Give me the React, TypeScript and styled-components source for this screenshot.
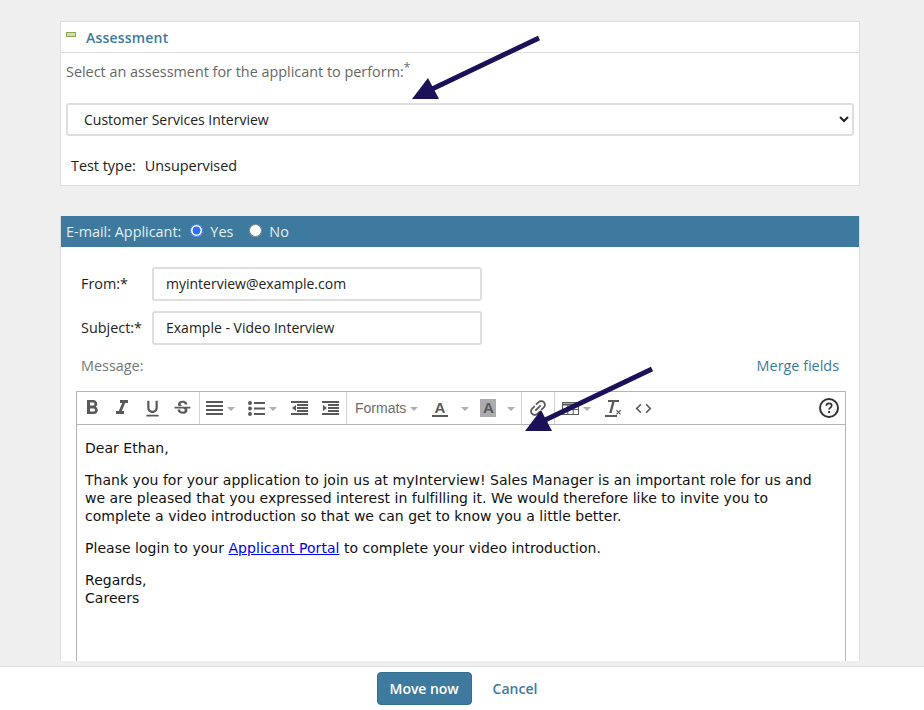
import styled, { createGlobalStyle } from "styled-components";
import {
  MdFormatBold,
  MdFormatItalic,
  MdFormatUnderlined,
  MdStrikethroughS,
  MdLink,
  MdCode,
} from "react-icons/md";

const GlobalStyle = createGlobalStyle`
  html, body { margin: 0; height: 100%; overflow: hidden; }
  body {
    background: #efefef;
    font-family: "Open Sans", "Liberation Sans", sans-serif;
    font-size: 14.4px;
    color: #222;
  }
  * { box-sizing: border-box; }
`;

const Page = styled.div`
  position: relative;
  height: 710px;
  display: flex;
  flex-direction: column;
`;

const Main = styled.main`
  flex: 1;
  min-height: 0;
  display: flex;
  flex-direction: column;
  gap: 30px;
  padding: 21px 64px 5px 60px;
`;

const Panel = styled.section`
  background: #fff;
  border: 1px solid #dedede;
  height: 165px;
  flex: none;
`;

const PanelHeader = styled.div`
  height: 31px;
  display: flex;
  align-items: center;
  gap: 10px;
  padding-left: 5px;
  border-bottom: 1px solid #dedede;
  color: #3d7a9e;
  font-size: 14px;
  font-weight: 600;
  letter-spacing: 0.2px;
`;

const Collapse = styled.span`
  width: 10px;
  height: 5px;
  margin-top: -5px;
  background: #d5dfa5;
  border: 1px solid #8ea34f;
`;

const PanelBody = styled.div`
  padding: 9px 5px 0;
`;

const Prompt = styled.div`
  color: #666;
  line-height: 20px;
  height: 31px;
  sup {
    font-size: 12px;
    line-height: 0;
    vertical-align: 5px;
  }
`;

const Select = styled.select`
  display: block;
  width: 100%;
  height: 33px;
  margin-top: 10px;
  padding: 0 12px;
  border: 2px solid #dedede;
  border-radius: 3px;
  background: #fff;
  color: #222;
  font: inherit;
  font-size: 14px;
`;

const TestType = styled.div`
  display: flex;
  gap: 9px;
  margin: 20px 0 0 5px;
  line-height: 20px;
`;

const EmailPanel = styled.section`
  flex: 1;
  min-height: 0;
  overflow: hidden;
  background: #fff;
  border-left: 1px solid #dedede;
  border-right: 1px solid #dedede;
`;

const EmailHeader = styled.div`
  height: 31px;
  display: flex;
  align-items: center;
  padding-left: 5px;
  background: #3d7a9e;
  color: #e6eef3;
`;

const RadioLabel = styled.label`
  display: flex;
  align-items: center;
  margin-left: 9px;
  margin-right: 7px;
  input {
    width: 13px;
    height: 13px;
    margin: -2px 7px 0 0;
    accent-color: #2f6ff0;
  }
`;

const EmailBody = styled.div`
  padding: 20px 13px 0 15px;
`;

const FieldRow = styled.div`
  display: grid;
  grid-template-columns: 71px 330px;
  align-items: center;
  margin-bottom: 10px;
  padding-left: 5px;
`;

const FieldLabel = styled.label`
  margin-top: -2px;
`;

const TextInput = styled.input`
  height: 34px;
  width: 100%;
  padding: 0 12px 2px;
  border: 2px solid #dedede;
  border-radius: 3px;
  color: #222;
  font: inherit;
  font-size: 14px;
`;

const MessageRow = styled.div`
  display: flex;
  justify-content: space-between;
  padding: 1px 7px 0 5px;
  height: 36px;
  line-height: 20px;
  color: #777;
`;

const MergeLink = styled.a`
  color: #3d7a9e;
`;

const Editor = styled.div`
  border: 1px solid #b4b4b4;
  height: 400px;
`;

const Toolbar = styled.div`
  height: 33px;
  display: flex;
  border-bottom: 1px solid #b4b4b4;
  color: #595959;
`;

const ToolGroup = styled.div<{ $padLeft?: number; $padRight?: number; $last?: boolean }>`
  display: flex;
  align-items: center;
  padding: 0 ${(p) => p.$padRight ?? 0}px 0 ${(p) => p.$padLeft ?? 0}px;
  border-right: ${(p) => (p.$last ? "0" : "1px solid #d2d2d2")};
`;

const ToolButton = styled.span<{ $w?: number }>`
  display: flex;
  align-items: center;
  justify-content: center;
  flex: none;
  width: ${(p) => p.$w ?? 30}px;
  gap: 4px;
`;

const Caret = styled.span`
  width: 0;
  height: 0;
  margin-top: 1px;
  border-left: 4px solid transparent;
  border-right: 4px solid transparent;
  border-top: 4px solid #b0b0b0;
`;

const Formats = styled.span`
  display: flex;
  align-items: center;
  gap: 4px;
  font-family: "Liberation Sans", sans-serif;
  font-size: 14px;
  color: #6b6b6b;
`;

const ColorLetter = styled.span<{ $shade?: boolean }>`
  width: 16px;
  height: 18px;
  display: flex;
  align-items: center;
  justify-content: center;
  font-family: "Liberation Sans", sans-serif;
  font-size: 15px;
  font-weight: 700;
  line-height: 1;
  color: #595959;
  background: ${(p) => (p.$shade ? "#acacac" : "transparent")};
  border-bottom: 2px solid ${(p) => (p.$shade ? "#acacac" : "#595959")};
`;

const HelpSpacer = styled.div`
  margin-left: auto;
  padding-right: 6px;
  display: flex;
  align-items: center;
  color: #333;
`;

const EditorBody = styled.div`
  padding: 14px 14px 0 8px;
  font-family: "DejaVu Sans", Verdana, sans-serif;
  font-size: 14px;
  line-height: 18px;
  letter-spacing: 0.03px;
  color: #111;
  p {
    margin: 0 0 14px;
  }
  a {
    color: #0000ee;
  }
`;

const Footer = styled.footer`
  flex: none;
  height: 44px;
  display: flex;
  align-items: center;
  justify-content: center;
  gap: 21px;
  padding-right: 10px;
  background: #fff;
  border-top: 1px solid #dedede;
`;

const MoveButton = styled.button`
  width: 95px;
  height: 33px;
  border: 1px solid #336d8f;
  border-radius: 4px;
  background: #3d7a9e;
  color: #fff;
  font: 600 14px "Open Sans", sans-serif;
  letter-spacing: -0.05px;
`;

const CancelLink = styled.a`
  color: #3d7a9e;
  font-size: 14px;
  font-weight: 600;
`;

const Arrow = styled.svg`
  position: absolute;
  left: 0;
  top: 0;
  pointer-events: none;
`;

const AlignIcon = () => (
  <svg width="17" height="14" viewBox="0 0 17 14" fill="#595959">
    <rect y="0" width="17" height="2" />
    <rect y="4" width="17" height="2" />
    <rect y="8" width="17" height="2" />
    <rect y="12" width="17" height="2" />
  </svg>
);

const ListIcon = () => (
  <svg width="17" height="15" viewBox="0 0 17 15" fill="#595959">
    <circle cx="2" cy="2" r="2" />
    <circle cx="2" cy="7.5" r="2" />
    <circle cx="2" cy="13" r="2" />
    <rect x="6" y="1" width="11" height="2" />
    <rect x="6" y="6.5" width="11" height="2" />
    <rect x="6" y="12" width="11" height="2" />
  </svg>
);

const IndentIcon = ({ flip }: { flip?: boolean }) => (
  <svg width="17" height="14" viewBox="0 0 17 14" fill="#595959">
    <rect y="0" width="17" height="2" />
    <rect x="6" y="3" width="11" height="2" />
    <rect x="6" y="6" width="11" height="2" />
    <rect x="6" y="9" width="11" height="2" />
    <rect y="12" width="17" height="2" />
    <path d={flip ? "M1 4l4 3-4 3z" : "M5 4L1 7l4 3z"} />
  </svg>
);

const TableIcon = () => (
  <svg width="17" height="13" viewBox="0 0 17 13" fill="none" stroke="#595959">
    <rect x="0.5" y="0.5" width="16" height="12" />
    <path d="M0 2.5h17" strokeWidth="2" />
    <path d="M5.8 3v10M11.2 3v10M0 7.5h17" />
  </svg>
);

const ClearIcon = () => (
  <svg width="17" height="18" viewBox="0 0 17 18" fill="#595959">
    <rect x="3" y="1" width="11" height="2" />
    <path d="M7.4 2h2.4L6.6 14H4.2z" />
    <rect x="0" y="16" width="12" height="2" />
    <path d="M11 11.5l.8-.8 1.7 1.7 1.7-1.7.8.8-1.7 1.7 1.7 1.7-.8.8-1.7-1.7-1.7 1.7-.8-.8 1.7-1.7z" />
  </svg>
);

const HelpIcon = () => (
  <svg width="20" height="20" viewBox="0 0 20 20" fill="none">
    <circle cx="10" cy="10" r="9" stroke="#333" strokeWidth="2" />
    <path
      d="M7.4 7.8c0-1.6 1.1-2.5 2.7-2.5s2.6.9 2.6 2.2c0 1.1-.6 1.6-1.4 2.2-.8.5-1.2 1-1.2 1.9"
      stroke="#333"
      strokeWidth="1.8"
    />
    <rect x="9.1" y="13" width="1.9" height="2" fill="#333" />
  </svg>
);

export default function App() {
  return (
    <>
      <GlobalStyle />
      <Page>
        <Main>
          <Panel>
            <PanelHeader>
              <Collapse />
              Assessment
            </PanelHeader>
            <PanelBody>
              <Prompt>
                Select an assessment for the applicant to perform:<sup>*</sup>
              </Prompt>
              <Select defaultValue="customer">
                <option value="customer">Customer Services Interview</option>
              </Select>
              <TestType>
                <span>Test type:</span>
                <span>Unsupervised</span>
              </TestType>
            </PanelBody>
          </Panel>

          <EmailPanel>
            <EmailHeader>
              E-mail: Applicant:
              <RadioLabel>
                <input type="radio" name="email" defaultChecked />
                Yes
              </RadioLabel>
              <RadioLabel>
                <input type="radio" name="email" />
                No
              </RadioLabel>
            </EmailHeader>
            <EmailBody>
              <FieldRow>
                <FieldLabel>From:*</FieldLabel>
                <TextInput defaultValue="myinterview@example.com" />
              </FieldRow>
              <FieldRow>
                <FieldLabel>Subject:*</FieldLabel>
                <TextInput defaultValue="Example - Video Interview" />
              </FieldRow>
              <MessageRow>
                <span>Message:</span>
                <MergeLink>Merge fields</MergeLink>
              </MessageRow>
              <Editor>
                <Toolbar>
                  <ToolGroup>
                    <ToolButton><MdFormatBold size={24} /></ToolButton>
                    <ToolButton><MdFormatItalic size={24} /></ToolButton>
                    <ToolButton><MdFormatUnderlined size={21} /></ToolButton>
                    <ToolButton><MdStrikethroughS size={21} /></ToolButton>
                    <ToolButton $w={2} />
                  </ToolGroup>
                  <ToolGroup>
                    <ToolButton $w={41}><AlignIcon /><Caret /></ToolButton>
                    <ToolButton $w={43}><ListIcon /><Caret /></ToolButton>
                    <ToolButton $w={31}><IndentIcon /></ToolButton>
                    <ToolButton $w={31}><IndentIcon flip /></ToolButton>
                  </ToolGroup>
                  <ToolGroup $padLeft={8} $padRight={6}>
                    <Formats>Formats<Caret /></Formats>
                    <ToolButton $w={43}><ColorLetter>A</ColorLetter></ToolButton>
                    <Caret />
                    <ToolButton $w={38}><ColorLetter $shade>A</ColorLetter></ToolButton>
                    <Caret />
                  </ToolGroup>
                  <ToolGroup>
                    <ToolButton $w={32}><MdLink size={22} style={{ transform: "rotate(-45deg)" }} /></ToolButton>
                  </ToolGroup>
                  <ToolGroup $last>
                    <ToolButton $w={43}><TableIcon /><Caret /></ToolButton>
                    <ToolButton $w={30}><ClearIcon /></ToolButton>
                    <ToolButton $w={30}><MdCode size={19} /></ToolButton>
                  </ToolGroup>
                  <HelpSpacer><HelpIcon /></HelpSpacer>
                </Toolbar>
                <EditorBody>
                  <p>Dear Ethan,</p>
                  <p>
                    Thank you for your application to join us at myInterview! Sales Manager is an
                    important role for us and we are pleased that you expressed interest in
                    fulfilling it. We would therefore like to invite you to complete a video
                    introduction so that we can get to know you a little better.
                  </p>
                  <p>
                    Please login to your <a href="#portal">Applicant Portal</a> to complete your
                    video introduction.
                  </p>
                  <p>
                    Regards,
                    <br />
                    Careers
                  </p>
                </EditorBody>
              </Editor>
            </EmailBody>
          </EmailPanel>
        </Main>

        <Footer>
          <MoveButton>Move now</MoveButton>
          <CancelLink>Cancel</CancelLink>
        </Footer>

        <Arrow width="924" height="710" viewBox="0 0 924 710">
          <path d="M539 38L430 90" stroke="#1a1158" strokeWidth="5" />
          <path d="M412 99L428 78L439 99z" fill="#1a1158" />
          <path d="M652 369L543 421" stroke="#1a1158" strokeWidth="5" />
          <path d="M525 431L541 410L552 431z" fill="#1a1158" />
        </Arrow>
      </Page>
    </>
  );
}
